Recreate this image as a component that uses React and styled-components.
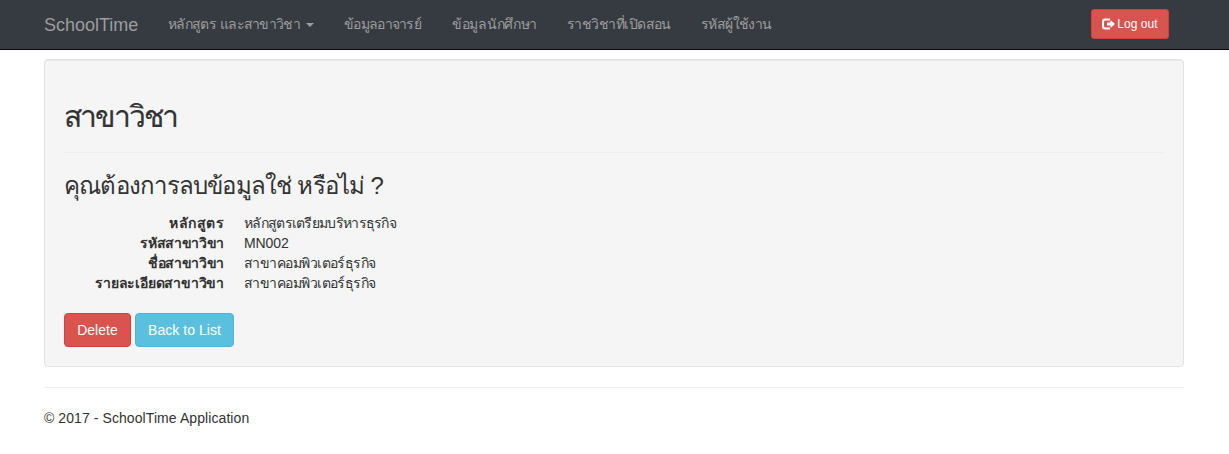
import React from 'react';
import styled, { createGlobalStyle } from 'styled-components';

const GlobalStyle = createGlobalStyle`
  *, *::before, *::after { box-sizing: border-box; }
  body {
    margin: 0;
    background: #fff;
    color: #333;
    font: 14px/20px "Liberation Sans", Arial, sans-serif;
    overflow: hidden;
  }
`;

const Container = styled.div`
  width: 1140px;
  margin-left: 44px;
`;

const Navbar = styled.nav`
  height: 50px;
  background: #363a41;
  border-bottom: 1px solid #080808;
`;

const NavRow = styled(Container)`
  display: flex;
  height: 49px;
  padding-right: 15px;
`;

const Brand = styled.a`
  width: 109px;
  padding-top: 15px;
  font-size: 18px;
  color: #9d9d9d;
`;

const NavItem = styled.a`
  display: flex;
  width: ${(p) => p.$w}px;
  padding: 14px 15px;
  color: #9d9d9d;
  white-space: nowrap;
  letter-spacing: ${(p) => p.$track}px;
  word-spacing: 1px;
`;

const Caret = styled.span`
  margin: 9px 0 0 6px;
  height: 0;
  border-top: 4px solid;
  border-left: 4px solid transparent;
  border-right: 4px solid transparent;
`;

const Button = styled.button`
  display: inline-flex;
  align-items: center;
  justify-content: center;
  width: ${(p) => p.$w}px;
  height: 34px;
  padding: 0;
  border: 1px solid ${(p) => (p.$info ? '#46b8da' : '#d43f3a')};
  border-radius: 4px;
  background: ${(p) => (p.$info ? '#5bc0de' : '#d9534f')};
  color: #fff;
  font: inherit;
  letter-spacing: 0.04px;
  white-space: nowrap;
`;

const LogoutButton = styled(Button)`
  height: 30px;
  margin: 9px 0 0 auto;
  gap: 2px;
  border-radius: 3px;
  font-size: 12px;
  line-height: 18px;
`;

const Well = styled.main`
  height: 308px;
  margin-top: 9px;
  padding: 39px 19px 19px;
  border: 1px solid #e3e3e3;
  border-radius: 4px;
  background: #f5f5f5;
  box-shadow: inset 0 1px 1px rgba(0, 0, 0, 0.05);
`;

const Title = styled.h2`
  height: 33px;
  margin: 0 0 20px;
  font-size: 30px;
  font-weight: 400;
  line-height: 35px;
  letter-spacing: -2px;
  -webkit-text-stroke: 0.2px currentColor;
`;

const Question = styled.h3`
  height: 30px;
  margin: 0 0 10px;
  font-size: 24px;
  font-weight: 400;
  line-height: 26px;
  letter-spacing: -0.78px;
`;

const Rule = styled.hr`
  height: 1px;
  margin: 20px 0;
  border: 0;
  background: #eee;
`;

const Details = styled.dl`
  display: grid;
  grid-template-columns: 160px 1fr;
  grid-auto-rows: 20px;
  column-gap: 20px;
  margin: 0 0 20px;
`;

const Term = styled.dt`
  font-weight: 700;
  text-align: right;
  white-space: nowrap;
  letter-spacing: ${(p) => p.$track}px;
`;

const Value = styled.dd`
  margin: 0;
  letter-spacing: ${(p) => p.$track}px;
`;

const Actions = styled.div`
  display: flex;
  gap: 4px;
`;

const Footer = styled.footer`
  height: 20px;
  letter-spacing: 0.08px;
`;

const LogoutIcon = () => (
  <svg width="13" height="12" viewBox="0 0 13 12" fill="#fff" aria-hidden="true">
    <path d="M8 .5H3Q0 .5 0 3.5v5q0 3 3 3h5v-2H3.5Q2 9.5 2 8V4q0-1.500 1.500-1.500H8z" />
    <path d="M8.500 2 13 6 8.500 10V7.500H5V4.500h3.500z" />
  </svg>
);

const navItems = [
  { label: 'หลักสูตร และสาขาวิชา', width: 176, track: -0.7, menu: true },
  { label: 'ข้อมูลอาจารย์', width: 108, track: -0.7 },
  { label: 'ข้อมูลนักศึกษา', width: 115, track: -0.3 },
  { label: 'ราชวิชาที่เปิดสอน', width: 134, track: -0.55 },
  { label: 'รหัสผู้ใช้งาน', width: 101, track: -0.6 },
];

const details = [
  { term: 'หลักสูตร', value: 'หลักสูตรเตรียมบริหารธุรกิจ', termTrack: 0.5, valueTrack: -0.7 },
  { term: 'รหัสสาขาวิขา', value: 'MN002', termTrack: -0.35, valueTrack: -0.1 },
  { term: 'ชื่อสาขาวิขา', value: 'สาขาคอมพิวเตอร์ธุรกิจ', termTrack: -0.35, valueTrack: -0.55 },
  { term: 'รายละเอียดสาขาวิขา', value: 'สาขาคอมพิวเตอร์ธุรกิจ', termTrack: -0.2, valueTrack: -0.55 },
];

export default function App() {
  return (
    <>
      <GlobalStyle />
      <Navbar>
        <NavRow>
          <Brand>SchoolTime</Brand>
          {navItems.map((item) => (
            <NavItem key={item.label} $w={item.width} $track={item.track}>
              {item.label}
              {item.menu && <Caret />}
            </NavItem>
          ))}
          <LogoutButton $w={78}><LogoutIcon />Log out</LogoutButton>
        </NavRow>
      </Navbar>
      <Container>
        <Well>
          <Title>สาขาวิชา</Title>
          <Rule />
          <Question>คุณต้องการลบข้อมูลใช่ หรือไม่ ?</Question>
          <Details>
            {details.map((d) => (
              <React.Fragment key={d.term}>
                <Term $track={d.termTrack}>{d.term}</Term>
                <Value $track={d.valueTrack}>{d.value}</Value>
              </React.Fragment>
            ))}
          </Details>
          <Actions>
            <Button $w={67}>Delete</Button>
            <Button $w={99} $info>Back to List</Button>
          </Actions>
        </Well>
        <Rule />
        <Footer>© 2017 - SchoolTime Application</Footer>
      </Container>
    </>
  );
}
